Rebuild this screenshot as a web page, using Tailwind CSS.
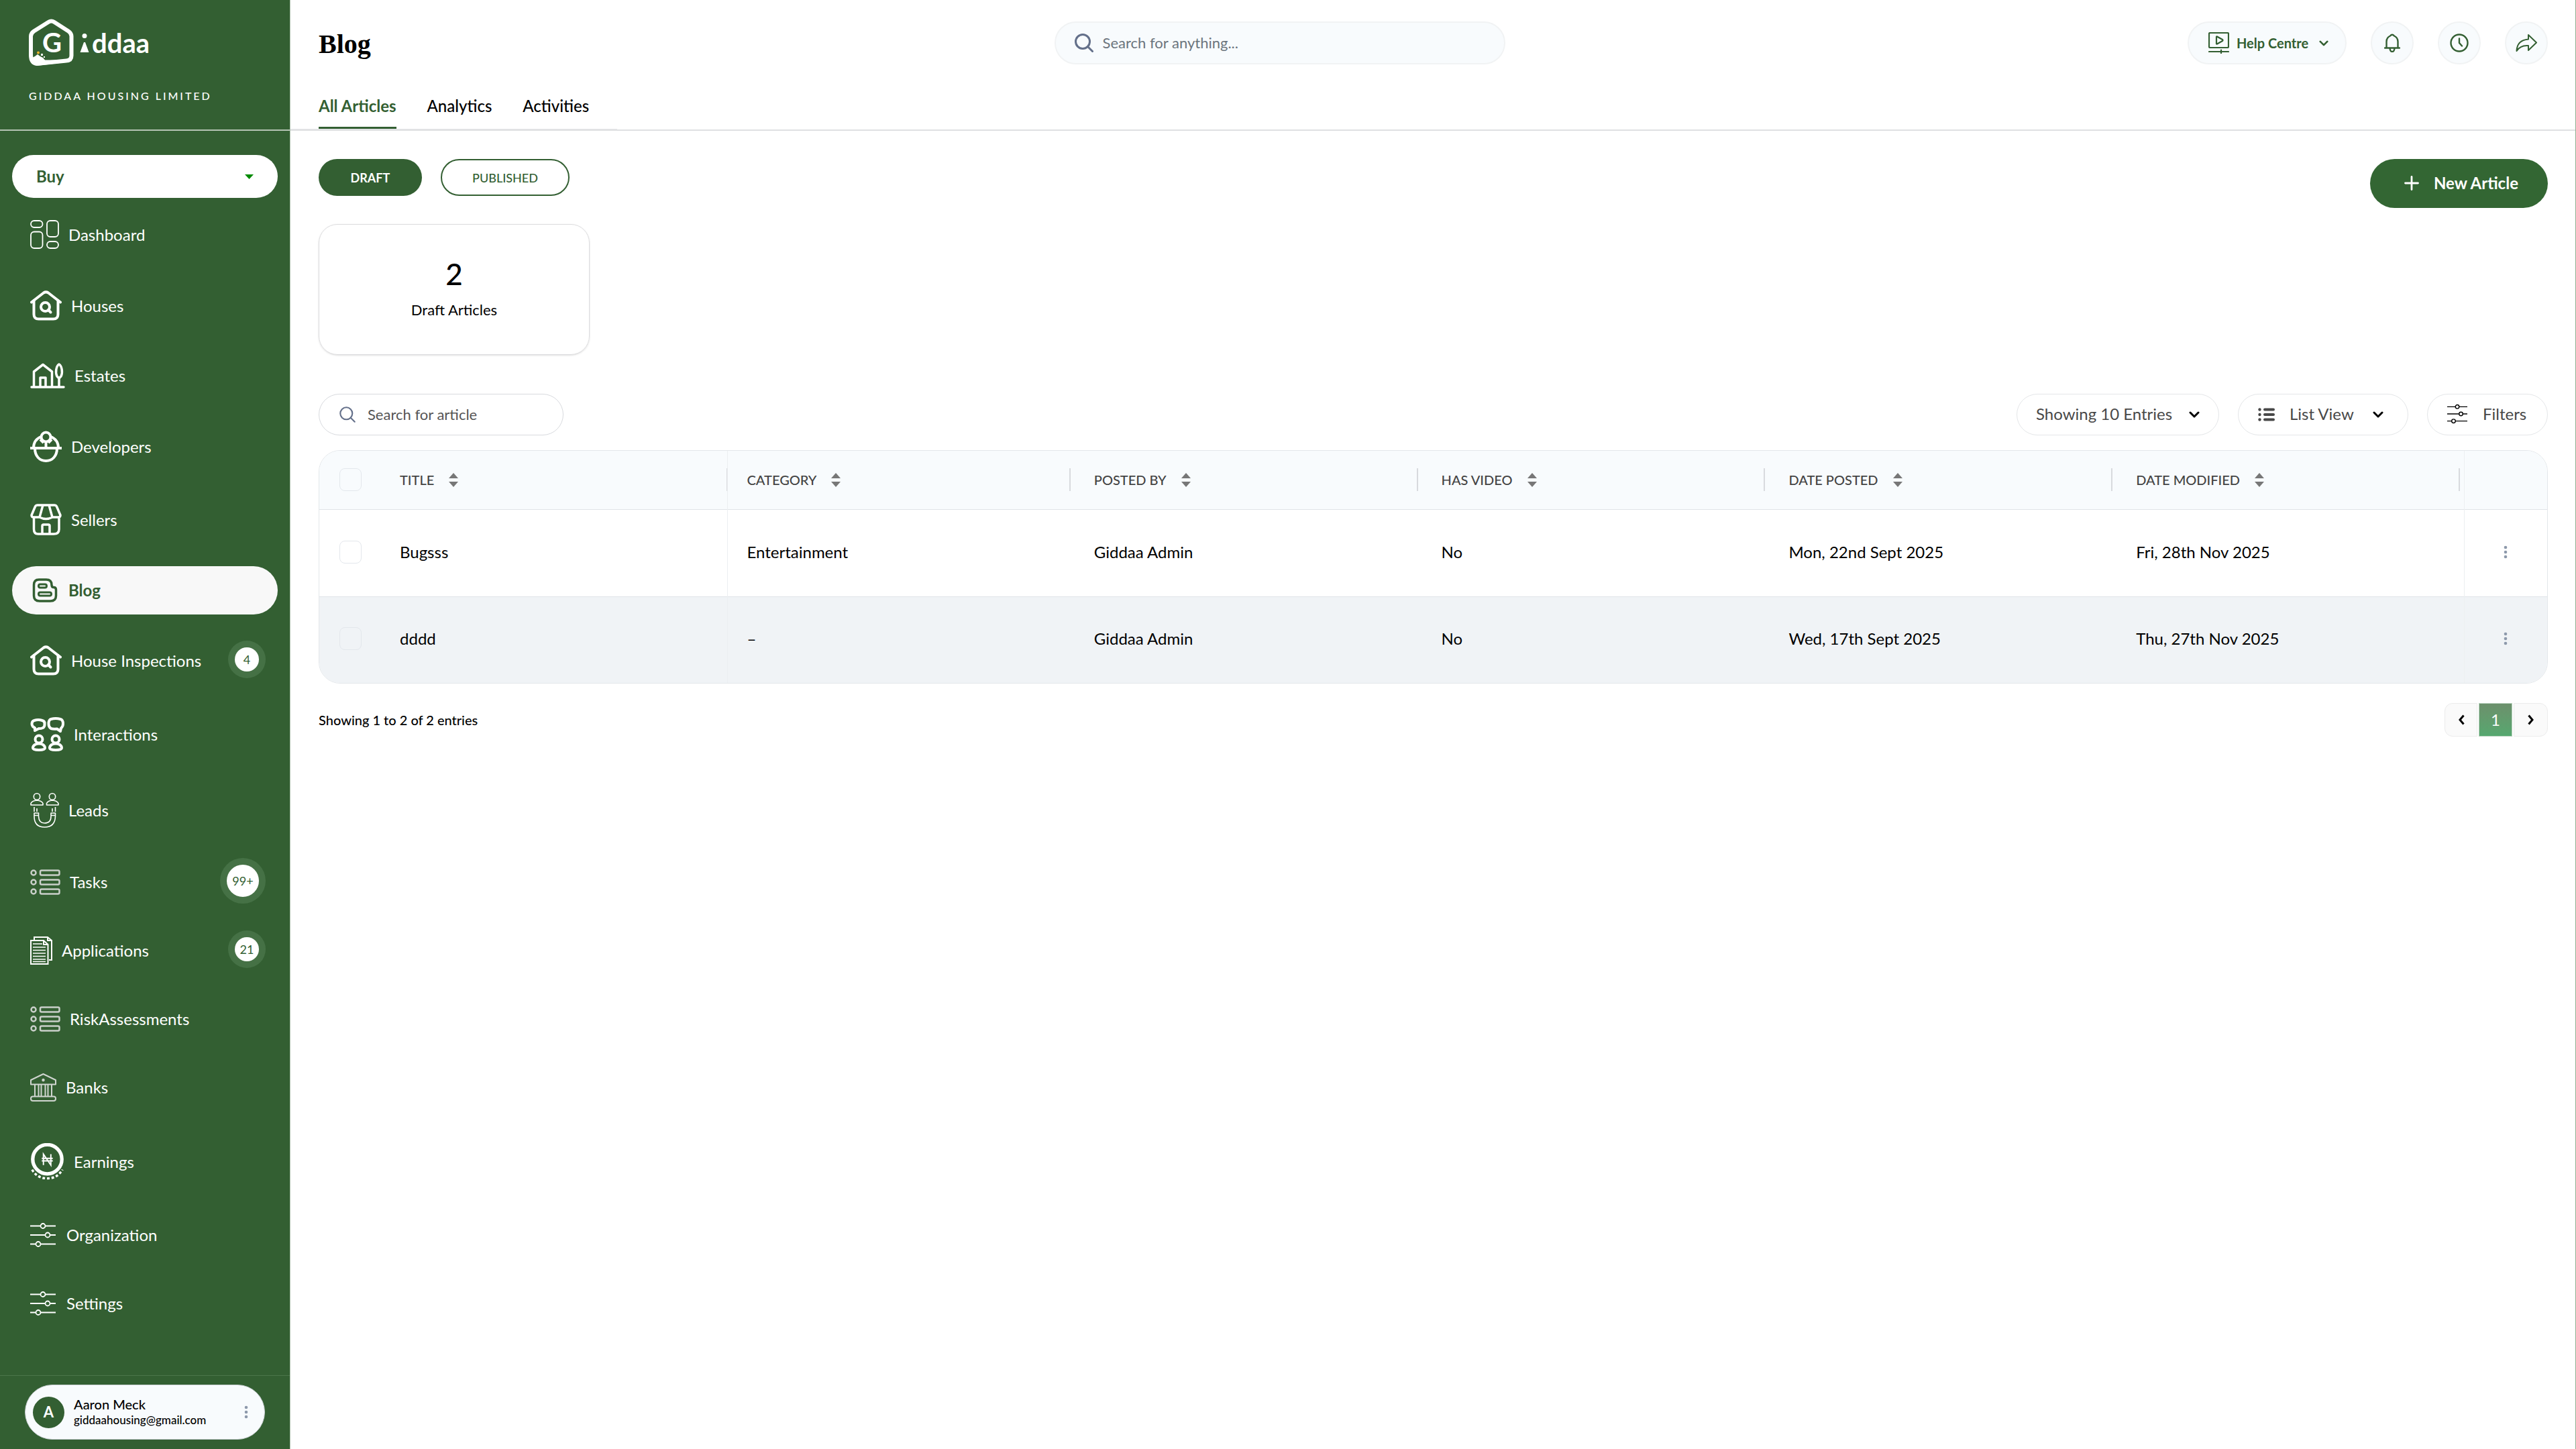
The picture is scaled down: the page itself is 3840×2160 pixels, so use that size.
<!DOCTYPE html>
<html lang="en">
<head>
<meta charset="utf-8">
<meta name="viewport" content="width=device-width, initial-scale=1">
<title>Blog - Giddaa</title>
<script src="https://cdn.jsdelivr.net/npm/@tailwindcss/browser@4"></script>
</head>
<body class="flex min-h-screen bg-white font-['Lato','Open_Sans',sans-serif] text-[24px] leading-7 text-black">

<!-- Shared icons -->
<svg class="hidden" aria-hidden="true">
  <symbol id="i-house" viewBox="0 0 47 44" fill="none" stroke="currentColor" stroke-linecap="round" stroke-linejoin="round">
    <path d="M2 17 L20 3 Q23.500 .8 27 3 L45 17" stroke-width="4"/>
    <path d="M5.500 14.500 V35 Q5.500 42 12.500 42 H34.500 Q41.500 42 41.500 35 V14.500" stroke-width="4"/>
    <circle cx="22.500" cy="24" r="6.500" stroke-width="4"/><path d="M27 28.500 L30.500 32" stroke-width="4"/>
  </symbol>
  <symbol id="i-list" viewBox="0 0 45 38" fill="none" stroke="currentColor" stroke-width="2.500">
    <circle cx="5" cy="5" r="3.500"/><circle cx="5" cy="19" r="3.500"/><circle cx="5" cy="33" r="3.500"/>
    <rect x="15" y="1.500" width="28.500" height="7" rx="2"/><rect x="15" y="15.500" width="28.500" height="7" rx="2"/><rect x="15" y="29.500" width="28.500" height="7" rx="2"/>
  </symbol>
  <symbol id="i-sliders" viewBox="0 0 38 36" fill="none" stroke="currentColor" stroke-width="1.800">
    <path d="M0 4.500 H15.500 M22.500 4.500 H38 M0 18 H22.500 M29.500 18 H38 M0 31.500 H8.500 M15.500 31.500 H38"/>
    <circle cx="19" cy="4.500" r="3.500"/><circle cx="26" cy="18" r="3.500"/><circle cx="12" cy="31.500" r="3.500"/>
  </symbol>
  <symbol id="i-dots" viewBox="0 0 6 20" fill="currentColor"><circle cx="3" cy="3" r="2.300"/><circle cx="3" cy="10" r="2.300"/><circle cx="3" cy="17" r="2.300"/></symbol>
  <symbol id="i-sort" viewBox="0 0 14 21" fill="currentColor"><path d="M7 0 L14 8 H0 Z M0 13 H14 L7 21 Z"/></symbol>
  <symbol id="i-chevron" viewBox="0 0 16 10" fill="none" stroke="currentColor" stroke-linecap="round" stroke-linejoin="round"><path d="M2 2 L8 8 L14 2" stroke-width="3"/></symbol>
  <symbol id="i-search" viewBox="0 0 28 28" fill="none" stroke="currentColor" stroke-linecap="round"><circle cx="12" cy="12" r="10.500"/><path d="M19.500 19.500 L26.500 26.500"/></symbol>
</svg>

<aside class="sticky top-0 flex h-screen w-[433px] shrink-0 flex-col border-r border-[#b4c6b4] bg-[#335f32] text-white">
  <div class="flex h-[195px] shrink-0 flex-col border-b-2 border-[#b5c4b4] pl-[43px] pt-7">
    <div class="flex items-center">
      <svg class="h-[71px] w-[68px]" viewBox="0 0 68 71" role="img" aria-label="Giddaa">
        <path fill="none" stroke="#fff" stroke-width="6" stroke-linejoin="round" d="M29 5 Q33.500 2 38 5 L59 18.500 Q63.500 21.500 63.500 26 V55 Q63.500 62 56 62.500 L12 67 Q3 66 3 54 V26 Q3 21.500 7.500 18.500 Z"/>
        <path fill="#fff" d="M5 58 L9 56 L13 53 L17 56 L21 58 L24 61.500 H58 L54 65 L12 70 Q5 68 5 58 Z"/>
        <rect x="18" y="52" width="3" height="3" fill="#fff"/><rect x="22" y="56" width="2" height="2" fill="#fff"/>
        <circle cx="14" cy="50.500" r="2" fill="#eeb32b"/>
        <text x="20" y="50" font-size="40" font-weight="700" fill="#fff">G</text>
      </svg>
      <svg class="ml-2 h-7 w-[14px]" viewBox="0 0 14 28" fill="#fff" aria-hidden="true"><circle cx="7" cy="3.500" r="3.500"/><path d="M6 13 H8 L13.500 28 H.5 Z"/></svg>
      <span class="ml-1 text-[40px] leading-[40px] font-bold">ddaa</span>
    </div>
    <p class="mt-8 text-[16px] leading-6 font-medium tracking-[3px]">GIDDAA HOUSING LIMITED</p>
  </div>

  <div class="relative mx-[18px] mt-9 flex h-16 shrink-0 items-center rounded-full bg-white text-[#335f32]">
    <select aria-label="Mode" class="h-full w-full appearance-none rounded-full pl-9 font-bold"><option>Buy</option><option>Rent</option></select>
    <svg class="pointer-events-none absolute right-9 h-[7px] w-[13px]" viewBox="0 0 13 7"><path fill="#008a00" d="M0 0 H13 L6.500 7 Z"/></svg>
  </div>

  <nav class="mt-[17px] flex flex-col gap-[30px] px-[18px]">
    <a href="#" class="flex min-h-[70px] items-center gap-[14px] py-4 pl-[27px]">
      <svg class="h-[43px] w-[43px]" viewBox="0 0 43 43" fill="none" stroke="#fff" stroke-width="1.800"><rect x="1" y="1" width="17.500" height="10" rx="5"/><rect x="25" y="1" width="17" height="24" rx="5"/><rect x="1" y="17.500" width="17.500" height="24.500" rx="5"/><rect x="25" y="32" width="17" height="10" rx="5"/></svg>
      <span>Dashboard</span></a>
    <a href="#" class="flex min-h-[70px] items-center gap-[14px] py-4 pl-[27px]">
      <svg class="h-[45px] w-[47px]"><use href="#i-house"/></svg><span>Houses</span></a>
    <a href="#" class="flex min-h-[70px] items-center gap-[14px] py-4 pl-[27px]">
      <svg class="h-10 w-[52px]" viewBox="0 0 52 38" fill="none" stroke="#fff" stroke-width="3.500" stroke-linecap="round" stroke-linejoin="round"><path d="M2 36 H50 M5.500 35 V13 L19 2.500 L32.500 13 V35 M15 35 V22 H23 V35 M43 35 V23"/><path d="M43 2 C39 4 37 14 40 20 L43 23 L46 20 C49 14 47 4 43 2 Z"/></svg>
      <span>Estates</span></a>
    <a href="#" class="flex min-h-[70px] items-center gap-[14px] py-4 pl-[27px]">
      <svg class="h-[47px] w-[47px]" viewBox="0 0 47 47" fill="none" stroke="#fff" stroke-width="4"><path d="M0 26 H47"/><circle cx="23.500" cy="9.500" r="7"/><path d="M23.500 16.500 V26 M5 26 C5 18 9 12 16 9 M42 26 C42 18 38 12 31 9 M7 26 C7 38 14 45 23.500 45 S40 38 40 26 M15 13 L20 18 M32 13 L27 18"/></svg>
      <span>Developers</span></a>
    <a href="#" class="flex min-h-[70px] items-center gap-[14px] py-4 pl-[27px]">
      <svg class="h-[47px] w-[47px]" viewBox="0 0 47 47" fill="none" stroke="#fff" stroke-width="3.500" stroke-linejoin="round"><path d="M11 2 H36 Q38.500 2 39.500 4 L45 17 Q45 20 42 20 H33 Q23.500 25 14 20 H5 Q2 20 2 17 L7.500 4 Q8.500 2 11 2 Z M19 2 L14 20 M28 2 L33 20 M5.500 20 V38 Q5.500 45 12 45 H35 Q43 45 43 38 V20 M18 45 V33 Q18 31 20 31 H27 Q29 31 29 33 V45"/></svg>
      <span>Sellers</span></a>
    <a href="#" aria-current="page" class="flex min-h-[70px] items-center gap-[14px] rounded-full bg-[#f8f8f8] py-4 pl-[27px] font-bold text-[#335f32]">
      <svg class="h-10 w-[43px]" viewBox="0 0 43 36" fill="none" stroke="currentColor" stroke-width="3.500"><path d="M13 2 H24 Q32 2 32 10 Q32 13.500 35 13.500 Q38.500 13.500 38.500 17 V26 Q38.500 34 30 34 H14 Q5.500 34 5.500 26 V10 Q5.500 2 13 2 Z"/><rect x="12.500" y="9" width="12" height="5" rx="2.500" stroke-width="3"/><rect x="12.500" y="21" width="19" height="5" rx="2.500" stroke-width="3"/></svg>
      <span>Blog</span></a>
    <a href="#" class="flex min-h-[70px] items-center gap-[14px] py-4 pl-[27px]">
      <svg class="h-[45px] w-[47px]"><use href="#i-house"/></svg><span>House Inspections</span>
      <span class="mr-7 -mt-3 -mb-2 ml-auto flex size-9 items-center justify-center rounded-full bg-white text-[18px] text-[#335f32] ring-10 ring-[#457145]">4</span></a>
    <a href="#" class="flex min-h-[70px] items-center gap-[14px] py-4 pl-[27px]">
      <svg class="h-[51px] w-[51px]" viewBox="0 0 51 51" fill="none" stroke="#fff" stroke-width="4" stroke-linejoin="round"><path d="M6 5 Q12 3 18 5 Q22 6 21.500 10 Q22 14 19 16 Q15 17.500 13 17 L7 20 V16 Q2.500 14 2.500 10 Q2.500 6 6 5 Z"/><path d="M31 3 Q38 1 45 3 Q49 4 49 10 Q49 14 46 16.500 L45 21 L40 17.500 Q34 18 31 17 Q27.500 15 27.500 10 Q27.500 4 31 3 Z"/><circle cx="13" cy="33" r="5.500"/><circle cx="38" cy="33" r="5.500"/><path d="M7 41 Q4 43 4 46 Q4 49 13 49 Q22 49 22 46 Q22 43 19 41 Q13 38 7 41 Z M32 41 Q29 43 29 46 Q29 49 38 49 Q47 49 47 46 Q47 43 44 41 Q38 38 32 41 Z"/></svg>
      <span>Interactions</span></a>
    <a href="#" class="flex min-h-[70px] items-center gap-[14px] py-4 pl-[27px]">
      <svg class="h-[52px] w-[43px]" viewBox="0 0 43 52" fill="none" stroke="#fff" stroke-width="1.600" stroke-linejoin="round"><circle cx="10" cy="5.500" r="4.700"/><circle cx="33" cy="5.500" r="4.700"/><path d="M1 18 V15.500 Q3 11.500 10 11 Q17 11.500 19 15.500 V18 Z M24.500 18 V15.500 Q26.500 11.500 33 11 Q40 11.500 42 15.500 V18 Z M6 21 V28 M10 23 V28 M33 23 V28 M37.500 21 V28 M6 30 H12.500 V35 Q13 45 21.500 45 Q31 45 31 35 V30 H37.500 V35 Q37 51 21.500 51 Q6 51 6 35 Z M6 33.500 H12.500 M31 33.500 H37.500"/></svg>
      <span>Leads</span></a>
    <a href="#" class="flex min-h-[70px] items-center gap-[14px] py-4 pl-[27px]">
      <svg class="h-[38px] w-[45px] text-[#c9cfc9]"><use href="#i-list"/></svg><span>Tasks</span>
      <span class="mr-7 -mt-3 -mb-2 ml-auto flex size-12 items-center justify-center rounded-full bg-white text-[18px] text-[#335f32] ring-10 ring-[#457145]">99+</span></a>
    <a href="#" class="flex min-h-[70px] items-center gap-[14px] py-4 pl-[27px]">
      <svg class="h-[42px] w-[33px]" viewBox="0 0 33 42" fill="none" stroke="#fff" stroke-width="2"><path d="M6 5 V1 H26 L32 6 V35 H28 M1 6 H20 L26.500 12 V41 H1 Z M20 6 V12 H26.500 M26 1 V6 H32"/><path stroke-width="1.500" d="M4 11 H18 M4 16 H23 M4 20.500 H23 M4 25 H23 M4 29.500 H23 M4 34 H23 M4 37.500 H23"/></svg>
      <span>Applications</span>
      <span class="mr-7 -mt-3 -mb-2 ml-auto flex size-9 items-center justify-center rounded-full bg-white text-[18px] text-[#335f32] ring-10 ring-[#457145]">21</span></a>
    <a href="#" class="flex min-h-[70px] items-center gap-[14px] py-4 pl-[27px]">
      <svg class="h-[38px] w-[45px] text-[#c9cfc9]"><use href="#i-list"/></svg><span>RiskAssessments</span></a>
    <a href="#" class="flex min-h-[70px] items-center gap-[14px] py-4 pl-[27px]">
      <svg class="h-[42px] w-[39px]" viewBox="0 0 39 42" fill="none" stroke="#d0d5d0" stroke-width="2" stroke-linejoin="round"><path d="M1 16.500 V10 L19.500 1 L38 10 V16.500 Z M7 17 V34 M12.500 17 V34 M16.500 17 V34 M22.500 17 V34 M26.500 17 V34 M32 17 V34"/><rect x="1" y="34.500" width="37" height="6.500" rx="3"/><circle cx="19.500" cy="10" r="1.200"/></svg>
      <span>Banks</span></a>
    <a href="#" class="flex min-h-[70px] items-center gap-[14px] py-4 pl-[27px]">
      <svg class="h-[55px] w-[51px]" viewBox="0 0 51 57" fill="none" stroke="#fff"><ellipse cx="25.500" cy="25" rx="22.500" ry="22.500" stroke-width="5.500"/><path stroke-width="2" d="M19.500 34 V17 L31 34 V17 M17 23.500 H34 M17 27.500 H34"/><path stroke-width="3.500" stroke-dasharray="4 3" d="M2 41 C8 51 16 54.500 25.500 54.500 S43 51 49 41"/></svg>
      <span>Earnings</span></a>
    <a href="#" class="flex min-h-[70px] items-center gap-4 py-4 pl-[27px]">
      <svg class="h-10 w-[38px]"><use href="#i-sliders"/></svg><span>Organization</span></a>
    <a href="#" class="flex min-h-[70px] items-center gap-4 py-4 pl-[27px]">
      <svg class="h-10 w-[38px]"><use href="#i-sliders"/></svg><span>Settings</span></a>
  </nav>

  <div class="mt-auto border-t border-[#4b754a] px-[37px] pt-[13px] pb-[14px]">
    <button type="button" class="flex h-[82px] w-full items-center rounded-full border border-[#c9cfd3] bg-[#f8fbfd] pr-6 pl-[11px] text-left text-black">
      <span class="flex size-[47px] items-center justify-center rounded-full bg-[#335f32] text-[22px] font-bold text-white">A</span>
      <span class="ml-[14px] flex flex-col">
        <span class="text-[20px] leading-6 font-medium">Aaron Meck</span>
        <span class="text-[17px] leading-6 font-medium">giddaahousing@gmail.com</span>
      </span>
      <svg class="ml-auto h-5 w-[6px] text-[#8d99ab]"><use href="#i-dots"/></svg>
    </button>
  </div>
</aside>

<div class="flex min-w-0 flex-1 flex-col border-r border-[#8fae90]">
  <header class="flex h-[195px] flex-col border-b-2 border-[#dfe0e2] pt-8">
    <div class="grid h-16 grid-cols-[33%_672px_1fr] items-center pr-[41px] pl-[42px]">
      <h1 class="pt-1 font-['Liberation_Serif',serif] text-[40px] leading-[44px] font-bold">Blog</h1>
      <div class="flex h-16 items-center gap-[14px] rounded-full border-2 border-[#f1f3f4] bg-[#f8fbfd] px-7">
        <svg class="size-7 text-[#64708a] [stroke-width:3]"><use href="#i-search"/></svg>
        <input type="search" aria-label="Search" placeholder="Search for anything..." class="min-w-0 flex-1 bg-transparent text-[22px] outline-none placeholder:text-[#6c757d]">
      </div>
      <div class="flex justify-end gap-9 text-[#335f32]">
        <button type="button" class="flex h-16 w-[237px] items-center rounded-full border-2 border-[#f1f3f4] bg-[#f8fbfd] pl-[29px]">
          <svg class="h-8 w-[31px]" viewBox="0 0 31 32" fill="none" stroke="currentColor" stroke-width="2.200" stroke-linejoin="round" stroke-linecap="round"><rect x="1" y="1" width="29" height="22" rx="1.500"/><path d="M12 7 Q12 6 13 6.500 L21 11 Q22 12 21 13 L13 17.500 Q12 18 12 17 Z M1 29 H30 M19 26.500 V31.500"/></svg>
          <span class="ml-[11px] text-[20px] font-bold">Help Centre</span>
          <svg class="ml-4 h-[9px] w-[14px]"><use href="#i-chevron"/></svg>
        </button>
        <button type="button" aria-label="Notifications" class="flex size-16 items-center justify-center rounded-full border-2 border-[#f1f3f4] bg-[#f8fbfd]">
          <svg class="h-7 w-6" viewBox="0 0 24 28" fill="none" stroke="currentColor" stroke-width="2.400" stroke-linejoin="round" stroke-linecap="round"><path d="M1 21.500 H23 M3.500 21 V12 Q3.500 6 9 3.500 Q12 0 15 3.500 Q20.500 6 20.500 12 V21 M8.500 22 Q9 27 12 27 Q15 27 15.500 22"/></svg>
        </button>
        <button type="button" aria-label="History" class="flex size-16 items-center justify-center rounded-full border-2 border-[#f1f3f4] bg-[#f8fbfd]">
          <svg class="size-7" viewBox="0 0 28 28" fill="none" stroke="currentColor" stroke-width="2.400" stroke-linecap="round" stroke-linejoin="round"><circle cx="14" cy="14" r="12.500"/><path d="M14 7.500 V14 L18 18.500"/></svg>
        </button>
        <button type="button" aria-label="Share" class="flex size-16 items-center justify-center rounded-full border-2 border-[#f1f3f4] bg-[#f8fbfd]">
          <svg class="h-[26px] w-8" viewBox="0 0 32 26" fill="none" stroke="currentColor" stroke-width="2" stroke-linejoin="round"><path d="M19 1 L31 12.500 L19 24 V17 Q7 16 1.500 25 Q2 9 19 7.500 Z"/></svg>
        </button>
      </div>
    </div>
    <nav class="mt-auto flex gap-[46px] self-start border-b border-[#e4e6e8] px-[42px]">
      <a href="#" aria-current="page" class="border-b-3 border-[#335f32] pb-[17px] font-bold text-[#335f32]">All Articles</a>
      <a href="#" class="border-b-3 border-transparent pb-[17px] font-medium">Analytics</a>
      <a href="#" class="border-b-3 border-transparent pb-[17px] font-medium">Activities</a>
    </nav>
  </header>

  <main class="flex flex-col pt-[42px] pr-[41px] pb-16 pl-[42px]">
    <div class="flex items-start">
      <button type="button" class="h-[55px] w-[154px] rounded-full bg-[#335f32] text-[18px] font-bold text-white">DRAFT</button>
      <button type="button" class="ml-7 h-[55px] w-[192px] rounded-full border-2 border-[#335f32] text-[18px] font-medium text-[#335f32]">PUBLISHED</button>
      <button type="button" class="ml-auto flex h-[73px] w-[265px] items-center rounded-full bg-[#336633] pb-[2px] pl-[51px] font-bold text-white">
        <svg class="size-[22px]" viewBox="0 0 22 22" stroke="#fff" stroke-width="2.800" stroke-linecap="round"><path d="M11 1.500 V20.500 M1.500 11 H20.500"/></svg>
        <span class="ml-[22px]">New Article</span>
      </button>
    </div>

    <section class="mt-6 flex h-[195px] w-[404px] flex-col items-center justify-center rounded-[28px] border border-[#dcdcde] pb-1 shadow-sm">
      <p class="text-[44px] leading-[48px] font-medium">2</p>
      <p class="mt-4 text-[22px]">Draft Articles</p>
    </section>

    <div class="mt-[58px] flex items-center text-[#484848]">
      <div class="flex h-[62px] w-[365px] items-center gap-[18px] rounded-full border border-[#d8dade] pl-[30px]">
        <svg class="size-6 text-[#64708a] [stroke-width:2.500]"><use href="#i-search"/></svg>
        <input type="search" aria-label="Search for article" placeholder="Search for article" class="w-[260px] bg-transparent text-[22px] outline-none placeholder:text-[#555]">
      </div>
      <div class="relative ml-auto flex h-[62px] w-[302px] items-center rounded-full border border-[#e4e6e8]">
        <select aria-label="Entries per page" class="size-full appearance-none rounded-full pb-[2px] pl-7 outline-none"><option>Showing 10 Entries</option><option>Showing 20 Entries</option></select>
        <svg class="pointer-events-none absolute right-7 h-[10px] w-4 text-black"><use href="#i-chevron"/></svg>
      </div>
      <div class="relative ml-7 flex h-[62px] w-[254px] items-center rounded-full border border-[#e4e6e8]">
        <svg class="pointer-events-none absolute left-[29px] h-5 w-[25px]" viewBox="0 0 25 20" fill="currentColor"><circle cx="2.500" cy="2.500" r="2.200"/><circle cx="2.500" cy="10" r="2.200"/><circle cx="2.500" cy="17.500" r="2.200"/><rect x="8" y=".5" width="17" height="4" rx="2"/><rect x="8" y="8" width="17" height="4" rx="2"/><rect x="8" y="15.500" width="17" height="4" rx="2"/></svg>
        <select aria-label="View" class="size-full appearance-none rounded-full pb-[2px] pl-[76px] outline-none"><option>List View</option><option>Grid View</option></select>
        <svg class="pointer-events-none absolute right-9 h-[10px] w-4 text-black"><use href="#i-chevron"/></svg>
      </div>
      <button type="button" class="ml-7 flex h-[62px] w-[180px] items-center rounded-full border border-[#e4e6e8] pb-[2px] pl-[29px]">
        <svg class="h-[30px] w-[30px] text-black"><use href="#i-sliders"/></svg>
        <span class="ml-[23px]">Filters</span>
      </button>
    </div>

    <div class="mt-[22px] overflow-hidden rounded-[32px] border border-[#e3e7ea]">
      <table class="w-full table-fixed border-collapse text-left">
        <colgroup><col class="w-[120px]"><col class="w-[488px]"><col><col><col><col><col><col class="w-[124px]"></colgroup>
        <thead class="bg-[#f8fbfd] text-[20px] text-[#444]">
          <tr class="h-[87px] border-b border-[#e0e4e8]">
            <th class="pl-[30px]"><input type="checkbox" aria-label="Select all" class="block h-[34px] w-[33px] appearance-none rounded-lg border border-[#e3e7ec]"></th>
            <th class="border-r border-[#eceff1] font-medium"><span class="flex h-[34px] items-center gap-[22px] border-r border-[#d8dade]">TITLE <svg class="h-[21px] w-[14px] text-[#777]"><use href="#i-sort"/></svg></span></th>
            <th class="pr-[6px] pl-[29px] font-medium"><span class="flex h-[34px] items-center gap-[22px] border-r-2 border-[#d8dade]">CATEGORY <svg class="h-[21px] w-[14px] text-[#777]"><use href="#i-sort"/></svg></span></th>
            <th class="pr-[6px] pl-[29px] font-medium"><span class="flex h-[34px] items-center gap-[22px] border-r-2 border-[#d8dade]">POSTED BY <svg class="h-[21px] w-[14px] text-[#777]"><use href="#i-sort"/></svg></span></th>
            <th class="pr-[6px] pl-[29px] font-medium"><span class="flex h-[34px] items-center gap-[22px] border-r-2 border-[#d8dade]">HAS VIDEO <svg class="h-[21px] w-[14px] text-[#777]"><use href="#i-sort"/></svg></span></th>
            <th class="pr-[6px] pl-[29px] font-medium"><span class="flex h-[34px] items-center gap-[22px] border-r-2 border-[#d8dade]">DATE POSTED <svg class="h-[21px] w-[14px] text-[#777]"><use href="#i-sort"/></svg></span></th>
            <th class="pr-[6px] pl-[29px] font-medium"><span class="flex h-[34px] items-center gap-[22px] border-r-2 border-[#d8dade]">DATE MODIFIED <svg class="h-[21px] w-[14px] text-[#777]"><use href="#i-sort"/></svg></span></th>
            <th class="border-l border-[#eceff1]" aria-label="Actions"></th>
          </tr>
        </thead>
        <tbody>
          <tr class="h-[130px] border-b border-[#e0e4e8] [&>td]:pb-[3px]">
            <td class="pl-[30px]"><input type="checkbox" aria-label="Select Bugsss" class="block h-[34px] w-[33px] appearance-none rounded-lg border border-[#e3e7ec]"></td>
            <td class="border-r border-[#eceff1]">Bugsss</td>
            <td class="pl-[29px]">Entertainment</td>
            <td class="pl-[29px]">Giddaa Admin</td>
            <td class="pl-[29px]">No</td>
            <td class="pl-[29px]">Mon, 22nd Sept 2025</td>
            <td class="pl-[29px]">Fri, 28th Nov 2025</td>
            <td class="border-l border-[#eceff1]"><button type="button" aria-label="Actions for Bugsss" class="mx-auto flex size-10 items-center justify-center text-[#8d99ab]"><svg class="h-5 w-[6px]"><use href="#i-dots"/></svg></button></td>
          </tr>
          <tr class="h-[129px] bg-[#f0f3f6] [&>td]:pb-[3px]">
            <td class="pl-[30px]"><input type="checkbox" aria-label="Select dddd" class="block h-[34px] w-[33px] appearance-none rounded-lg border border-[#e3e7ec]"></td>
            <td class="border-r border-[#eceff1]">dddd</td>
            <td class="pl-[29px]">–</td>
            <td class="pl-[29px]">Giddaa Admin</td>
            <td class="pl-[29px]">No</td>
            <td class="pl-[29px]">Wed, 17th Sept 2025</td>
            <td class="pl-[29px]">Thu, 27th Nov 2025</td>
            <td class="border-l border-[#eceff1]"><button type="button" aria-label="Actions for dddd" class="mx-auto flex size-10 items-center justify-center text-[#8d99ab]"><svg class="h-5 w-[6px]"><use href="#i-dots"/></svg></button></td>
          </tr>
        </tbody>
      </table>
    </div>

    <div class="mt-[29px] flex items-center">
      <p class="text-[20px] font-medium">Showing 1 to 2 of 2 entries</p>
      <nav class="ml-auto flex gap-[2px]" aria-label="Pagination">
        <button type="button" aria-label="Previous page" class="flex h-[50px] w-[49px] items-center justify-center rounded-l-xl border border-[#ececec] bg-[#fafafa]"><svg class="h-4 w-[10px]" viewBox="0 0 10 16" fill="none" stroke="#000" stroke-width="3"><path d="M8.500 1.500 L3 8 L8.500 14.500"/></svg></button>
        <button type="button" aria-current="page" class="h-[50px] w-[50px] border border-[#b9d2bf] bg-linear-to-b from-[#6c906c] to-[#55a86f] text-white">1</button>
        <button type="button" aria-label="Next page" class="flex h-[50px] w-[51px] items-center justify-center rounded-r-xl border border-[#ececec] bg-[#fafafa]"><svg class="h-4 w-[10px]" viewBox="0 0 10 16" fill="none" stroke="#000" stroke-width="3"><path d="M1.500 1.500 L7 8 L1.500 14.500"/></svg></button>
      </nav>
    </div>
  </main>
</div>
</body>
</html>
